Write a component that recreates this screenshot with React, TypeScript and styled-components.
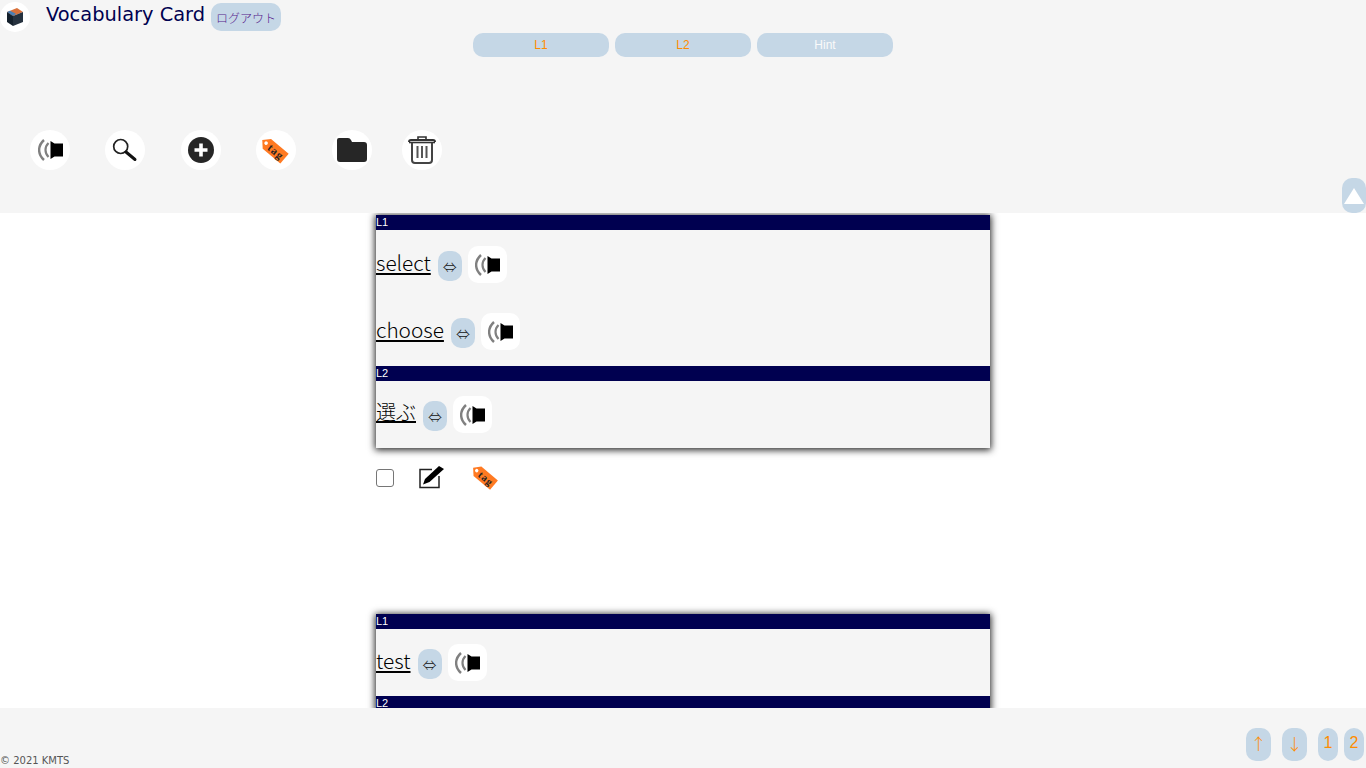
import * as React from 'react'
import styled, { createGlobalStyle } from 'styled-components'

const GlobalStyle = createGlobalStyle`
  html, body {
    margin: 0;
    height: 100%;
    overflow: hidden;
    background: #fff;
    font-family: "Liberation Sans", "Noto Sans CJK JP", sans-serif;
  }
`

const SpeakerIcon = () => (
  <svg width="25" height="24" viewBox="0 0 25 24">
    <path d="M6 2 C-0.5 8 -0.5 16 6 22" fill="none" stroke="#808080" strokeWidth="2.4" />
    <path d="M10.5 5 C6.5 9 6.5 15 10.5 19" fill="none" stroke="#808080" strokeWidth="2.2" />
    <path d="M12.5 3 L16.5 5.5 H25 V18.5 H16.5 L12.5 21 Z" fill="#000" />
  </svg>
)

const SearchIcon = () => (
  <svg width="30" height="30" viewBox="0 0 30 30">
    <circle cx="10.7" cy="11.5" r="7" fill="none" stroke="#222" strokeWidth="1.7" />
    <path d="M16 17 L25 24.5" stroke="#111" strokeWidth="3" strokeLinecap="round" />
  </svg>
)

const PlusIcon = () => (
  <svg width="28" height="28" viewBox="0 0 28 28">
    <circle cx="14" cy="14" r="13" fill="#262626" />
    <path d="M14 7.5 V20.5 M7.5 14 H20.5" stroke="#fff" strokeWidth="3.6" />
  </svg>
)

const TagIcon = ({ size = 32 }: { size?: number }) => (
  <svg width={size} height={size} viewBox="0 0 32 32">
    <g transform="translate(-3 -1) rotate(40 16 16)">
      <path d="M2 16 L8 9.5 H31 V22.5 H8 Z" fill="#ff7a22" />
      <circle cx="7" cy="16" r="1.8" fill="#fff" />
      <text x="20" y="20" textAnchor="middle" fontSize="11" letterSpacing="1" fontWeight="700" fontFamily="Liberation Serif, serif" fill="#222">tag</text>
    </g>
  </svg>
)

const FolderIcon = () => (
  <svg width="32" height="26" viewBox="0 0 32 26">
    <path d="M3 1 H12 Q14 1 15 3 L16 5 H28 Q31 5 31 8 V22 Q31 25 28 25 H4 Q1 25 1 22 V3 Q1 1 3 1 Z" fill="#262626" />
  </svg>
)

const TrashIcon = () => (
  <svg width="30" height="30" viewBox="0 0 30 30">
    <path d="M11 4 V2 H19 V4" fill="none" stroke="#333" strokeWidth="1.6" />
    <path d="M2 7 Q2 5 4 5 H26 Q28 5 28 7" fill="none" stroke="#333" strokeWidth="2" />
    <path d="M2 7.5 H28" stroke="#333" strokeWidth="1.6" />
    <path d="M5 8 V25 Q5 28 8 28 H22 Q25 28 25 25 V8" fill="none" stroke="#444" strokeWidth="2" />
    <path d="M10.5 11 V23 M15 11 V23 M19.5 11 V23" stroke="#555" strokeWidth="2" />
  </svg>
)

const EditIcon = () => (
  <svg width="26" height="24" viewBox="0 0 26 24">
    <path d="M13 3.5 H1 V21.5 H20 V10" fill="none" stroke="#222" strokeWidth="1.5" />
    <path d="M4 18.5 L6 13 L20 0 L25 3 L10.5 16 Z" fill="#000" />
  </svg>
)

const LogoIcon = () => (
  <svg width="20" height="20" viewBox="0 0 20 20">
    <path d="M2 5 L12 1 L18 5 L8 9 Z" fill="#d9713a" />
    <path d="M5 3.8 L11 6.8 L8 9 L2 5 Z" fill="#4b7fb5" />
    <path d="M2 5 L8 9 V19 L2 15 Z" fill="#14202c" />
    <path d="M8 9 L18 5 V15 L8 19 Z" fill="#26323f" />
  </svg>
)

const TermRow = ({ term, cjk }: { term: string; cjk?: boolean }) => (
  <Row>
    <Term href="#" $cjk={cjk}>{term}</Term>
    <SwapButton>⇔</SwapButton>
    <SpeakerButton>
      <SpeakerIcon />
    </SpeakerButton>
  </Row>
)

const App = () => (
  <Page>
    <GlobalStyle />
    <Header>
      <TopRow>
        <LogoCircle>
          <LogoIcon />
        </LogoCircle>
        <Title>Vocabulary Card</Title>
        <LogoutButton>ログアウト</LogoutButton>
      </TopRow>
      <Tabs>
        <Tab>L1</Tab>
        <Tab>L2</Tab>
        <Tab $muted>Hint</Tab>
      </Tabs>
      <Tools>
        <ToolCircle><SpeakerIcon /></ToolCircle>
        <ToolCircle><SearchIcon /></ToolCircle>
        <ToolCircle><PlusIcon /></ToolCircle>
        <ToolCircle><TagIcon /></ToolCircle>
        <ToolCircle><FolderIcon /></ToolCircle>
        <ToolCircle $tight><TrashIcon /></ToolCircle>
      </Tools>
      <CollapseButton>
        <svg width="20" height="16" viewBox="0 0 20 16">
          <path d="M10 0 L20 16 H0 Z" fill="#fff" />
        </svg>
      </CollapseButton>
    </Header>
    <Main>
      <Card>
        <CardBar>L1</CardBar>
        <CardBody $padded>
          <TermRow term="select" />
          <TermRow term="choose" />
        </CardBody>
        <CardBar>L2</CardBar>
        <CardBody>
          <TermRow term="選ぶ" cjk />
        </CardBody>
      </Card>
      <Actions>
        <Check type="checkbox" />
        <EditSlot><EditIcon /></EditSlot>
        <TagSlot><TagIcon size={30} /></TagSlot>
      </Actions>
      <Card>
        <CardBar>L1</CardBar>
        <CardBody>
          <TermRow term="test" />
        </CardBody>
        <CardBar>L2</CardBar>
      </Card>
    </Main>
    <Footer>
      <Copyright>© 2021 KMTS</Copyright>
      <Pager>
        <PageButton $arrow>↑</PageButton>
        <PageButton $arrow>↓</PageButton>
        <PageButton>1</PageButton>
        <PageButton>2</PageButton>
      </Pager>
    </Footer>
  </Page>
)
export default App

const Page = styled.div`
  display: flex;
  flex-direction: column;
  height: 100vh;
  overflow: hidden;
`
const Header = styled.header`
  position: relative;
  z-index: 2;
  flex: 0 0 213px;
  background: #f5f5f5;
`
const TopRow = styled.div`
  display: flex;
  align-items: flex-start;
  height: 33px;
`
const LogoCircle = styled.div`
  display: flex;
  align-items: center;
  justify-content: center;
  width: 30px;
  height: 30px;
  margin-top: 2px;
  border-radius: 50%;
  background: #fff;
`
const Title = styled.div`
  margin-left: 16px;
  color: #000050;
  font-family: "DejaVu Sans", sans-serif;
  font-size: 19.4px;
  line-height: 29px;
`
const LogoutButton = styled.div`
  display: flex;
  align-items: center;
  justify-content: center;
  width: 70px;
  height: 28px;
  margin: 3px 0 0 6px;
  border-radius: 10px;
  background: #c5d7e6;
  color: #551a8b;
  font-family: "Noto Sans CJK JP", sans-serif;
  font-size: 12px;
  font-weight: 300;
`
const Tabs = styled.div`
  display: flex;
  justify-content: center;
  gap: 6px;
`
const Tab = styled.div<{ $muted?: boolean }>`
  display: flex;
  align-items: center;
  justify-content: center;
  width: 136px;
  height: 24px;
  border-radius: 10px;
  background: #c5d7e6;
  color: ${props => (props.$muted ? '#fafafa' : '#ff8c00')};
  font-size: 12px;
`
const Tools = styled.div`
  display: flex;
  gap: 35.4px;
  padding: 73px 0 0 30px;
`
const ToolCircle = styled.div<{ $tight?: boolean }>`
  display: flex;
  align-items: center;
  justify-content: center;
  width: 40px;
  height: 40px;
  margin-left: ${props => (props.$tight ? '-5.4px' : '0')};
  border-radius: 50%;
  background: #fff;
`
const CollapseButton = styled.div`
  position: absolute;
  right: 0;
  bottom: 0;
  display: flex;
  align-items: center;
  justify-content: center;
  width: 24px;
  height: 35px;
  border-radius: 10px;
  background: #c5d7e6;
`
const Main = styled.main`
  flex: 1;
  min-height: 0;
  overflow: hidden;
  padding-top: 2px;
`
const Card = styled.section`
  width: 614px;
  margin: 0 auto;
  background: #f5f5f5;
  box-shadow: 0 1px 7px 1px #222;
`
const CardBar = styled.div`
  height: 15px;
  background: #000050;
  color: #fff;
  font-size: 11px;
  line-height: 15px;
`
const CardBody = styled.div<{ $padded?: boolean }>`
  padding: ${props => (props.$padded ? '1px 0' : '0')};
`
const Row = styled.div`
  display: flex;
  align-items: center;
  gap: 6px;
  height: 67px;
`
const Term = styled.a<{ $cjk?: boolean }>`
  margin: 0 1px 6px 0;
  color: #000;
  font-family: "Noto Sans CJK JP", sans-serif;
  font-size: ${props => (props.$cjk ? '20px' : '20.8px')};
  font-weight: 300;
  text-decoration: underline;
`
const SwapButton = styled.div`
  display: flex;
  align-items: center;
  justify-content: center;
  width: 24px;
  height: 30px;
  margin-top: 2px;
  border-radius: 10px;
  background: #c5d7e6;
  color: #111;
  font-family: "Noto Sans CJK JP", sans-serif;
  font-size: 14px;
  font-weight: 300;
`
const SpeakerButton = styled.div`
  display: flex;
  align-items: center;
  justify-content: center;
  width: 39px;
  height: 37px;
  border-radius: 10px;
  background: #fff;
`
const Actions = styled.div`
  display: flex;
  align-items: center;
  width: 614px;
  height: 60px;
  margin: 0 auto 106px;
`
const Check = styled.input`
  width: 18px;
  height: 18px;
  margin: 0;
  appearance: none;
  border: 1px solid #767676;
  border-radius: 3px;
  background: #fff;
`
const EditSlot = styled.div`
  display: flex;
  margin-left: 25px;
`
const TagSlot = styled.div`
  display: flex;
  margin: 0 0 3px 26px;
`
const Footer = styled.footer`
  position: relative;
  z-index: 2;
  display: flex;
  align-items: flex-end;
  justify-content: space-between;
  flex: 0 0 60px;
  background: #f5f5f5;
`
const Copyright = styled.div`
  color: #555;
  font-family: "DejaVu Sans", sans-serif;
  font-size: 10px;
  line-height: 14px;
`
const Pager = styled.div`
  display: flex;
  gap: 6px;
  padding: 0 2px 7px 0;
`
const PageButton = styled.div<{ $arrow?: boolean }>`
  display: flex;
  align-items: center;
  justify-content: center;
  box-sizing: border-box;
  width: ${props => (props.$arrow ? '25px' : '20px')};
  height: 33px;
  margin-right: ${props => (props.$arrow ? '5px' : '0')};
  padding-bottom: 4px;
  border-radius: 10px;
  background: #c5d7e6;
  color: #ff8c00;
  font-family: ${props => (props.$arrow ? '"Noto Sans CJK JP", sans-serif' : '"Liberation Sans", sans-serif')};
  font-size: 16px;
  font-weight: ${props => (props.$arrow ? 300 : 400)};
`
